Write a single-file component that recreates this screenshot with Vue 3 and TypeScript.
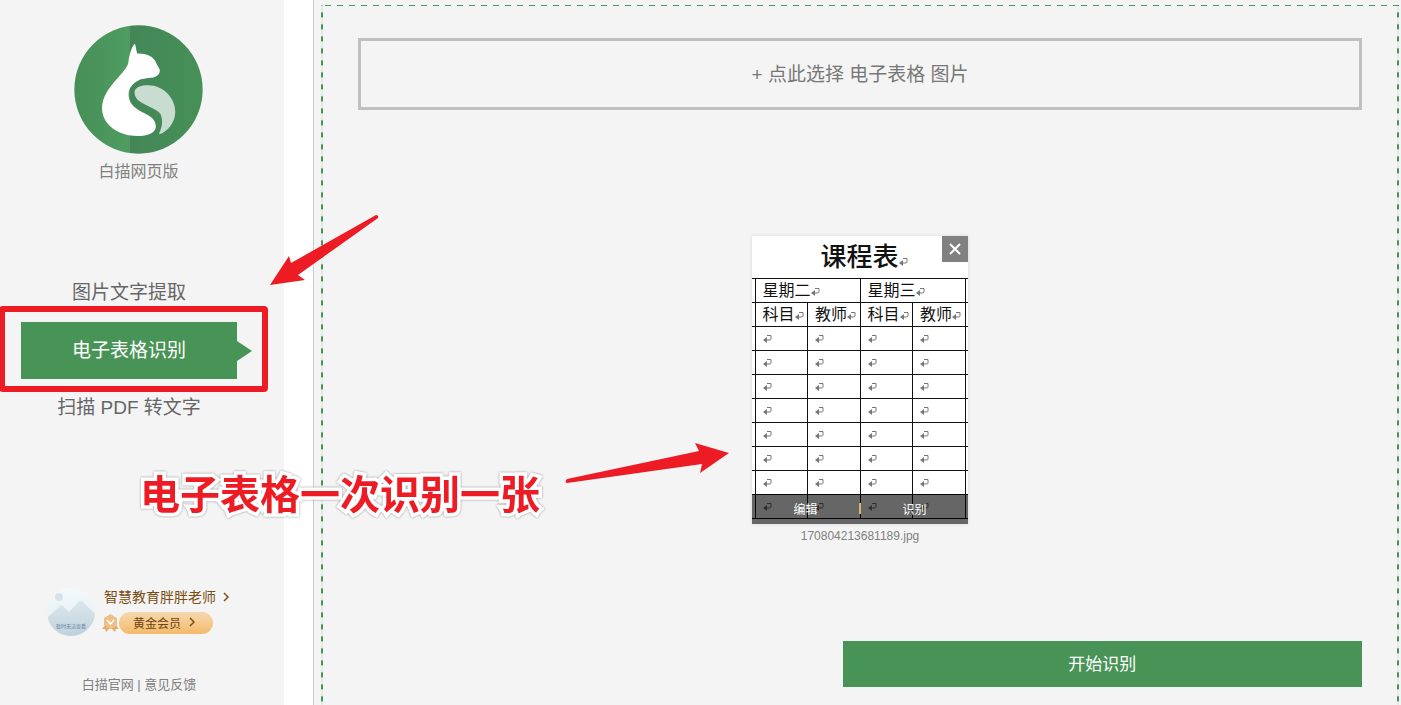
<script setup lang="ts">
import { ref } from 'vue'

interface NavItem {
  id: string
  label: string
}

const navItems: NavItem[] = [
  { id: 'text', label: '图片文字提取' },
  { id: 'sheet', label: '电子表格识别' },
  { id: 'pdf', label: '扫描 PDF 转文字' },
]
const active = ref('sheet')

const days: string[] = ['星期二', '星期三']
const heads: string[] = ['科目', '教师', '科目', '教师']
const blankRows = 8
</script>

<template>
  <div class="page">
    <aside class="sidebar">
      <div class="brand">
        <svg class="logo" viewBox="45 45 386 386" aria-hidden="true">
          <defs>
            <linearGradient id="logo-left" x1="0" x2="1" y1="0" y2="0">
              <stop offset="0" stop-color="#468f56" />
              <stop offset="1" stop-color="#4f9c61" />
            </linearGradient>
            <linearGradient id="logo-right" x1="0" x2="1" y1="0" y2="0">
              <stop offset="0" stop-color="#438657" />
              <stop offset="1" stop-color="#469158" />
            </linearGradient>
            <clipPath id="logo-clip"><circle cx="238" cy="238" r="192" /></clipPath>
          </defs>
          <g clip-path="url(#logo-clip)">
            <rect x="45" y="45" width="165" height="386" fill="url(#logo-left)" />
            <rect x="210" y="45" width="221" height="386" fill="url(#logo-right)" />
          </g>
          <path fill="#fff" d="M227 101C230 106 231 120 234 130C262 129 285 138 293 163C297 171 302 176 302 182C301 192 293 200 282 202C262 205 247 204 232 214C214 226 206 240 209 261C213 284 232 297 256 309C275 318 290 328 290 350C288 368 266 377 235 377C180 377 131 345 129 297C127 262 150 232 178 201C195 182 207 168 208 155C210 135 218 108 227 101Z" />
          <path fill="#c8dccf" d="M264 225C310 223 348 262 348 305C347 338 326 362 301 372Q299 370 301 366C309 350 312 330 304 312C294 297 262 288 243 275C229 265 224 252 227 241C232 229 247 225 264 225Z" />
        </svg>
        <span class="brand-name">白描网页版</span>
      </div>

      <nav class="nav">
        <button
          v-for="item in navItems"
          :key="item.id"
          type="button"
          class="nav-item"
          :class="{ active: item.id === active }"
          @click="active = item.id"
        >{{ item.label }}</button>
      </nav>

      <div class="user">
        <svg class="avatar" viewBox="0 0 48 48" aria-hidden="true">
          <defs>
            <linearGradient id="sky" x1="0" x2="0" y1="0" y2="1">
              <stop offset="0" stop-color="#f3f8fa" />
              <stop offset="1" stop-color="#e3edf2" />
            </linearGradient>
            <linearGradient id="hill" x1="0" x2="0" y1="0" y2="1">
              <stop offset="0" stop-color="#dce7ed" />
              <stop offset="1" stop-color="#bfd2dc" />
            </linearGradient>
            <clipPath id="avatar-clip"><circle cx="24" cy="24" r="24" /></clipPath>
          </defs>
          <g clip-path="url(#avatar-clip)">
            <rect width="48" height="48" fill="url(#sky)" />
            <circle cx="12" cy="9" r="4" fill="#d6e2ea" />
            <path fill="url(#hill)" d="M0 30L13 18Q14 17 16 18L22 24L32 13Q33 12 35 13L48 26V48H0Z" />
            <text x="24" y="40" text-anchor="middle" font-size="5" fill="#6485a0">暂时无法查看</text>
          </g>
        </svg>
        <div class="user-info">
          <a href="#" class="user-name">智慧教育胖胖老师
            <svg class="chev" viewBox="0 0 6 10" aria-hidden="true"><path d="M1 1L5 5L1 9" /></svg>
          </a>
          <div class="level">
            <svg class="medal" viewBox="0 0 17 18" aria-hidden="true">
              <path fill="#e5ad69" d="M3 11L0 15L3 15L4 18L8 14ZM14 11L17 15L14 15L13 18L9 14Z" />
              <path fill="#edc08a" d="M8.500 0L15 4V11L8.500 15L2 11V4Z" />
              <path fill="none" stroke="#fff" stroke-width="1.500" d="M5 6L8.500 10L12 6" />
            </svg>
            <button type="button" class="vip">黄金会员
              <svg class="chev" viewBox="0 0 6 10" aria-hidden="true"><path d="M1 1L5 5L1 9" /></svg>
            </button>
          </div>
        </div>
      </div>

      <footer class="links">
        <a href="#">白描官网</a> | <a href="#">意见反馈</a>
      </footer>
    </aside>

    <main class="main">
      <section class="frame">
        <button type="button" class="picker">+ 点此选择 电子表格 图片</button>

        <figure class="file">
          <div class="thumb">
            <svg class="defs" aria-hidden="true">
              <symbol id="ret" viewBox="0 0 9 9">
                <path fill="none" stroke="#777" d="M4 1.500H8V5Q8 6 6 6H2" />
                <path fill="#777" d="M0 6L4 3V9Z" />
              </symbol>
            </svg>
            <div class="sheet-title">课程表<svg class="ret"><use href="#ret" /></svg></div>
            <table class="sheet">
              <colgroup>
                <col class="edge"><col><col><col><col><col class="edge">
              </colgroup>
              <tbody>
                <tr>
                  <td />
                  <td v-for="day in days" :key="day" colspan="2">{{ day }}<svg class="ret"><use href="#ret" /></svg></td>
                  <td />
                </tr>
                <tr>
                  <td />
                  <td v-for="(head, i) in heads" :key="i">{{ head }}<svg class="ret"><use href="#ret" /></svg></td>
                  <td />
                </tr>
                <tr v-for="row in blankRows" :key="row">
                  <td />
                  <td v-for="col in 4" :key="col" class="blank"><svg class="ret"><use href="#ret" /></svg></td>
                  <td />
                </tr>
              </tbody>
            </table>
            <button type="button" class="close" aria-label="关闭">
              <svg viewBox="0 0 12 12" aria-hidden="true"><path d="M1 1L11 11M11 1L1 11" /></svg>
            </button>
            <div class="actions">
              <button type="button">编辑</button>
              <i class="divider" />
              <button type="button">识别</button>
            </div>
          </div>
          <figcaption>170804213681189.jpg</figcaption>
        </figure>

        <div class="submit-row">
          <button type="button" class="submit">开始识别</button>
        </div>
      </section>
    </main>

    <div class="marker-box" />
    <svg class="arrow arrow-nav" viewBox="0 0 110 72" aria-hidden="true">
      <path d="M0 71L19 42L21 49L106 1Q109 1 108 4L28 61L35 66Z" />
    </svg>
    <svg class="arrow arrow-file" viewBox="0 0 164 42" aria-hidden="true">
      <path d="M164 10L130 0L134 8L2 36Q-1 39 2 40L137 21L135 30Z" />
    </svg>
    <p class="note">电子表格一次识别一张</p>
  </div>
</template>

<style>
body {
  margin: 0;
}
</style>

<style scoped>
.page {
  position: relative;
  display: grid;
  grid-template-columns: 284px 1fr;
  column-gap: 29px;
  min-height: 100vh;
  overflow: hidden;
  background: #fff;
  color: #666;
  font-family: "Liberation Sans", "Noto Sans CJK SC", sans-serif;
}
button {
  margin: 0;
  padding: 0;
  border: 0;
  background: none;
  color: inherit;
  font: inherit;
  cursor: pointer;
}
a {
  color: inherit;
  text-decoration: none;
}
.sidebar {
  display: flex;
  flex-direction: column;
  box-sizing: border-box;
  padding: 25px 27px 10px 21px;
  background: #f4f4f4;
}
.brand {
  display: flex;
  flex-direction: column;
  align-items: center;
  padding-right: 1px;
}
.logo {
  width: 129px;
  height: 129px;
}
.brand-name {
  margin-top: 8px;
  color: #808080;
  font-size: 16px;
  line-height: 20px;
}
.nav {
  display: flex;
  flex-direction: column;
  width: 216px;
  margin-top: 82px;
}
.nav-item {
  position: relative;
  height: 58px;
  font-size: 19px;
  line-height: 56px;
}
.nav-item.active {
  height: 57px;
  background: #489456;
  color: #fff;
}
.nav-item.active::after {
  position: absolute;
  top: 19px;
  left: 100%;
  width: 15px;
  height: 20px;
  background: #489456;
  clip-path: polygon(0 0, 100% 50%, 0 100%);
  content: "";
}
.user {
  display: flex;
  gap: 7px;
  margin: auto 0 39px 26px;
}
.avatar {
  width: 48px;
  height: 48px;
}
.user-info {
  display: flex;
  flex-direction: column;
  gap: 6px;
}
.user-name {
  display: flex;
  align-items: center;
  gap: 7px;
  padding-left: 2px;
  color: #7a4d12;
  font-size: 14px;
  line-height: 18px;
  white-space: nowrap;
}
.chev {
  width: 6px;
  height: 10px;
  fill: none;
  stroke: #7a4d12;
  stroke-width: 1.5px;
}
.level {
  display: flex;
  align-items: center;
}
.medal {
  width: 17px;
  height: 18px;
}
.vip {
  display: flex;
  align-items: center;
  gap: 8px;
  height: 22px;
  padding: 0 18px 2px 14px;
  box-sizing: border-box;
  border-radius: 11px;
  background: linear-gradient(#f6d8b0, #f4ba6a);
  color: #6f430d;
  font-size: 12px;
}
.links {
  color: #808080;
  font-size: 13px;
  line-height: 20px;
  text-align: center;
}
.main {
  display: flex;
  padding: 5px 2px 0 7px;
  border-left: 1px solid #ccc;
  background: #f4f4f4;
}
.frame {
  display: flex;
  flex: 1;
  flex-direction: column;
  box-sizing: border-box;
  padding: 33px 37px 18px;
  background:
    repeating-linear-gradient(90deg, #489456 0 6px, transparent 6px 12px) 4px 0 / 100% 1px no-repeat,
    repeating-linear-gradient(#7fb389 0 1px, #489456 1px 5px, #a5caac 5px 6px, #e3ece5 6px 12px) 0 -5px / 2px 200% no-repeat,
    repeating-linear-gradient(#7fb389 0 1px, #489456 1px 5px, #a5caac 5px 6px, #e7ede8 6px 12px) 100% -5px / 2px 200% no-repeat;
}
.picker {
  height: 72px;
  padding-bottom: 4px;
  border: 3px solid #c0c0c0;
  color: #777;
  font-size: 19px;
}
.file {
  align-self: center;
  width: 216px;
  margin: 126px 0 20px;
}
.thumb {
  position: relative;
  height: 288px;
  overflow: hidden;
  background: #fff;
  box-shadow: 0 0 4px rgba(0, 0, 0, 0.12);
  color: #111;
}
.defs {
  position: absolute;
  width: 0;
  height: 0;
}
.sheet-title {
  height: 42px;
  padding-left: 8px;
  font-size: 26px;
  font-weight: 500;
  line-height: 42px;
  text-align: center;
}
.ret {
  width: 9px;
  height: 9px;
}
.sheet {
  width: 100%;
  table-layout: fixed;
  border-collapse: collapse;
  font-size: 16px;
  line-height: 20px;
}
.sheet .edge {
  width: 3px;
}
.sheet tr {
  height: 24px;
}
.sheet td {
  box-sizing: border-box;
  height: 24px;
  padding: 0 0 0 7px;
  border: 1px solid #111;
  white-space: nowrap;
}
.sheet td:first-child,
.sheet td:last-child {
  padding: 0;
}
.sheet td:first-child {
  border-left: 0;
}
.sheet td:last-child {
  border-right: 0;
}
.sheet .blank {
  padding: 0 0 2px 7px;
  line-height: 16px;
}
.close {
  position: absolute;
  top: 0;
  right: 0;
  display: grid;
  place-items: center;
  width: 26px;
  height: 26px;
  background: #808080;
}
.close svg {
  width: 12px;
  height: 12px;
  stroke: #fff;
  stroke-width: 2px;
}
.actions {
  position: absolute;
  right: 0;
  bottom: 0;
  left: 0;
  display: flex;
  align-items: center;
  box-sizing: border-box;
  height: 30px;
  padding-bottom: 2px;
  background: rgba(0, 0, 0, 0.6);
  color: #fff;
  font-size: 12px;
}
.actions button {
  flex: 1;
}
.divider {
  width: 2px;
  height: 11px;
  background: #d9b374;
}
.file figcaption {
  margin-top: 2px;
  color: #808080;
  font-size: 12px;
  line-height: 20px;
  text-align: center;
}
.submit-row {
  display: grid;
  grid-template-columns: 14fr 15fr;
  margin-top: auto;
}
.submit {
  grid-column: 2;
  height: 46px;
  padding-bottom: 4px;
  background: #489456;
  color: #fff;
  font-size: 17px;
}
.marker-box {
  position: absolute;
  top: 306px;
  left: -1px;
  box-sizing: border-box;
  width: 269px;
  height: 86px;
  border: 6px solid #ed1c24;
  border-radius: 4px;
  pointer-events: none;
}
.arrow {
  position: absolute;
  fill: #ed1c24;
  pointer-events: none;
}
.arrow-nav {
  top: 214px;
  left: 270px;
  width: 110px;
  height: 72px;
}
.arrow-file {
  top: 443px;
  left: 565px;
  width: 164px;
  height: 42px;
}
.note {
  position: absolute;
  top: 465px;
  left: 140px;
  margin: 0;
  color: #ed1c24;
  font-size: 40px;
  font-weight: 700;
  line-height: 60px;
  white-space: nowrap;
  -webkit-text-stroke: 7px #fff;
  stroke-linejoin: round;
  paint-order: stroke fill;
  filter: drop-shadow(0 0 1px rgba(0, 0, 0, 0.4));
  pointer-events: none;
}
</style>
